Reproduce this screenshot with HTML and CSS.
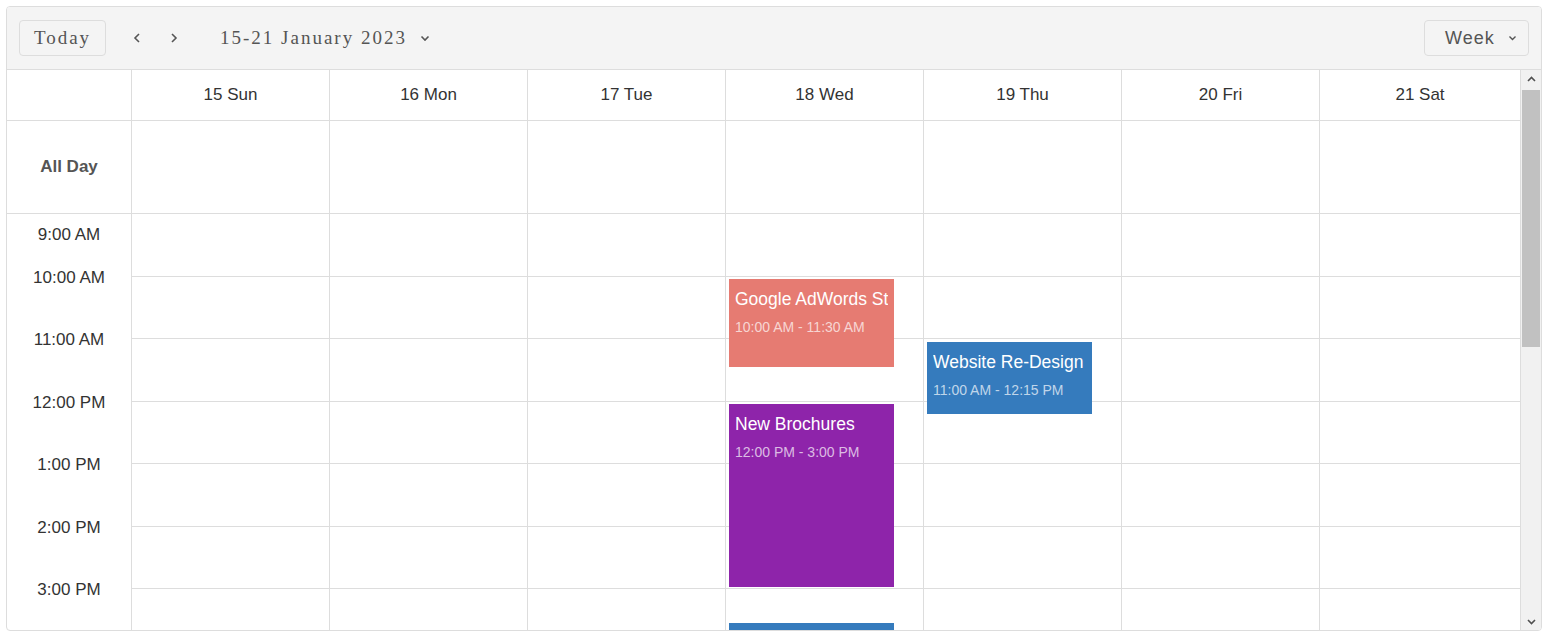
FILE: index.html
```html
<!DOCTYPE html>
<html lang="en">
<head>
  <meta charset="UTF-8">
  <meta name="viewport" content="width=device-width, initial-scale=1.0">
  <title>Scheduler - Week</title>
  <link rel="stylesheet" href="styles.css">
</head>
<body>
  <div class="scheduler">
    <div class="toolbar">
      <button class="today">Today</button>
      <button class="nav prev" title="Previous">
        <svg width="8" height="12" viewBox="0 0 8 12"><path d="M6 2 L2 6 L6 10" fill="none" stroke="#555" stroke-width="1.6"/></svg>
      </button>
      <button class="nav next" title="Next">
        <svg width="8" height="12" viewBox="0 0 8 12"><path d="M2 2 L6 6 L2 10" fill="none" stroke="#555" stroke-width="1.6"/></svg>
      </button>
      <button class="date-range">
        <span>15-21 January 2023</span>
        <svg width="10" height="7" viewBox="0 0 10 7"><path d="M1.5 1.5 L5 5 L8.5 1.5" fill="none" stroke="#555" stroke-width="1.6"/></svg>
      </button>
      <div class="spacer"></div>
      <button class="view">
        <span>Week</span>
        <svg width="9" height="6" viewBox="0 0 9 6"><path d="M1.5 1.5 L4.5 4.5 L7.5 1.5" fill="none" stroke="#555" stroke-width="1.4"/></svg>
      </button>
    </div>

    <div class="main">
      <div class="scroller">
        <div class="head-row">
          <div class="corner"></div>
          <div class="day-head">15 Sun</div>
          <div class="day-head">16 Mon</div>
          <div class="day-head">17 Tue</div>
          <div class="day-head">18 Wed</div>
          <div class="day-head">19 Thu</div>
          <div class="day-head">20 Fri</div>
          <div class="day-head">21 Sat</div>
        </div>

        <div class="allday-row">
          <div class="allday-label">All Day</div>
          <div class="allday-cell"></div>
          <div class="allday-cell"></div>
          <div class="allday-cell"></div>
          <div class="allday-cell"></div>
          <div class="allday-cell"></div>
          <div class="allday-cell"></div>
          <div class="allday-cell"></div>
        </div>

        <div class="grid">
          <div class="times" id="times"></div>
          <div class="day" data-day="0"></div>
          <div class="day" data-day="1"></div>
          <div class="day" data-day="2"></div>
          <div class="day" data-day="3">
            <div class="event salmon" style="top: 65px; height: 88px;">
              <div class="event-title">Google AdWords Strategy</div>
              <div class="event-time">10:00 AM - 11:30 AM</div>
            </div>
            <div class="event purple" style="top: 190px; height: 183px;">
              <div class="event-title">New Brochures</div>
              <div class="event-time">12:00 PM - 3:00 PM</div>
            </div>
            <div class="event blue" style="top: 409px; height: 80px;"></div>
          </div>
          <div class="day" data-day="4">
            <div class="event blue" style="top: 128px; height: 72px;">
              <div class="event-title">Website Re-Design</div>
              <div class="event-time">11:00 AM - 12:15 PM</div>
            </div>
          </div>
          <div class="day" data-day="5"></div>
          <div class="day" data-day="6"></div>
        </div>
      </div>

      <div class="scrollbar">
        <div class="sb-button">
          <svg width="9" height="6" viewBox="0 0 9 6"><path d="M1 5 L4.5 1.5 L8 5" fill="none" stroke="#505050" stroke-width="1.6"/></svg>
        </div>
        <div class="sb-track">
          <div class="sb-thumb"></div>
        </div>
        <div class="sb-button">
          <svg width="9" height="6" viewBox="0 0 9 6"><path d="M1 1 L4.5 4.5 L8 1" fill="none" stroke="#505050" stroke-width="1.6"/></svg>
        </div>
      </div>
    </div>
  </div>

  <script>
    const times = document.getElementById('times');
    const days = document.querySelectorAll('.day');
    const startHour = 9;
    const hours = 7;

    for (let i = 0; i < hours; i++) {
      const h = (startHour + i) % 24;
      const suffix = h < 12 ? 'AM' : 'PM';
      const label = (h % 12 === 0 ? 12 : h % 12) + ':00 ' + suffix;

      const slot = document.createElement('div');
      slot.className = 'time-slot';
      slot.innerHTML = '<span>' + label + '</span>';
      times.appendChild(slot);
    }

    days.forEach(day => {
      for (let i = 0; i < hours; i++) {
        const cell = document.createElement('div');
        cell.className = 'hour-cell';
        day.insertBefore(cell, day.firstChild);
      }
    });
  </script>
</body>
</html>
```

FILE: styles.css
```css
* {
  box-sizing: border-box;
}

body {
  margin: 0;
  padding: 6px 4px 4px 6px;
  font-family: "Liberation Sans", Arial, sans-serif;
  background: #fff;
  color: #333;
}

button {
  font: inherit;
  cursor: pointer;
}

.scheduler {
  border: 1px solid #ddd;
  border-radius: 4px;
  overflow: hidden;
}

/* toolbar */

.toolbar {
  display: flex;
  align-items: center;
  height: 63px;
  padding: 0 12px;
  background: #f4f4f4;
  border-bottom: 1px solid #ddd;
}

.today {
  width: 87px;
  height: 36px;
  padding: 0;
  border: 1px solid #ddd;
  border-radius: 4px;
  background: #f4f4f4;
  font-family: "Liberation Serif", "Times New Roman", serif;
  font-size: 19px;
  letter-spacing: 2px;
  color: #555;
}

.nav {
  display: flex;
  align-items: center;
  justify-content: center;
  width: 30px;
  height: 36px;
  padding: 0;
  border: none;
  background: none;
}

.prev {
  margin-left: 16px;
}

.next {
  margin-left: 7px;
}

.date-range {
  display: flex;
  align-items: center;
  gap: 13px;
  margin-left: 31px;
  padding: 0;
  border: none;
  background: none;
  font-family: "Liberation Serif", "Times New Roman", serif;
  font-size: 19px;
  letter-spacing: 2px;
  color: #555;
}

.spacer {
  flex: 1;
}

.view {
  display: flex;
  align-items: center;
  gap: 13px;
  width: 105px;
  height: 36px;
  padding: 0 0 0 20px;
  border: 1px solid #ddd;
  border-radius: 4px;
  background: #f4f4f4;
  font-size: 18px;
  letter-spacing: 1px;
  color: #555;
}

/* grid */

.main {
  display: flex;
  height: 560px;
}

.scroller {
  flex: 1;
  overflow: hidden;
}

.scrollbar {
  width: 20px;
  flex: none;
  display: flex;
  flex-direction: column;
  background: #f1f1f1;
}

.sb-button {
  height: 17px;
  display: flex;
  align-items: center;
  justify-content: center;
}

.sb-track {
  flex: 1;
  padding: 3px 1px 0 1px;
}

.sb-thumb {
  height: 257px;
  background: #c1c1c1;
}

.head-row,
.allday-row,
.grid {
  display: flex;
}

.corner,
.allday-label,
.times {
  width: 125px;
  flex: none;
  border-right: 1px solid #ddd;
}

.head-row {
  height: 51px;
  border-bottom: 1px solid #ddd;
}

.day-head,
.allday-cell,
.day {
  flex: 0 0 198px;
  border-right: 1px solid #ddd;
}

.day-head:last-child,
.allday-cell:last-child,
.day:last-child {
  flex: 1;
}

.day-head {
  display: flex;
  align-items: center;
  justify-content: center;
  font-size: 17px;
  color: #333;
}

.allday-row {
  height: 93px;
  border-bottom: 1px solid #ddd;
}

.allday-label {
  display: flex;
  align-items: center;
  justify-content: center;
  font-size: 17px;
  font-weight: bold;
  color: #555;
}

.time-slot {
  height: 62.5px;
  text-align: center;
  font-size: 17px;
  line-height: 22px;
  color: #333;
}

.time-slot span {
  display: block;
  transform: translateY(-10px);
}

.time-slot:first-child span {
  transform: translateY(10px);
}

.day {
  position: relative;
}

.hour-cell {
  height: 62.5px;
  border-bottom: 1px solid #ddd;
}

/* events */

.event {
  position: absolute;
  left: 3px;
  width: 165px;
  padding: 9px 6px;
  overflow: hidden;
  color: #fff;
}

.event-title {
  font-size: 17.5px;
  line-height: 22px;
  white-space: nowrap;
  overflow: hidden;
}

.event-time {
  margin-top: 9px;
  font-size: 14px;
  line-height: 16px;
  white-space: nowrap;
  color: rgba(255, 255, 255, 0.7);
}

.salmon {
  background: #e67b72;
}

.purple {
  background: #8e24aa;
}

.blue {
  background: #357bbd;
}
```
